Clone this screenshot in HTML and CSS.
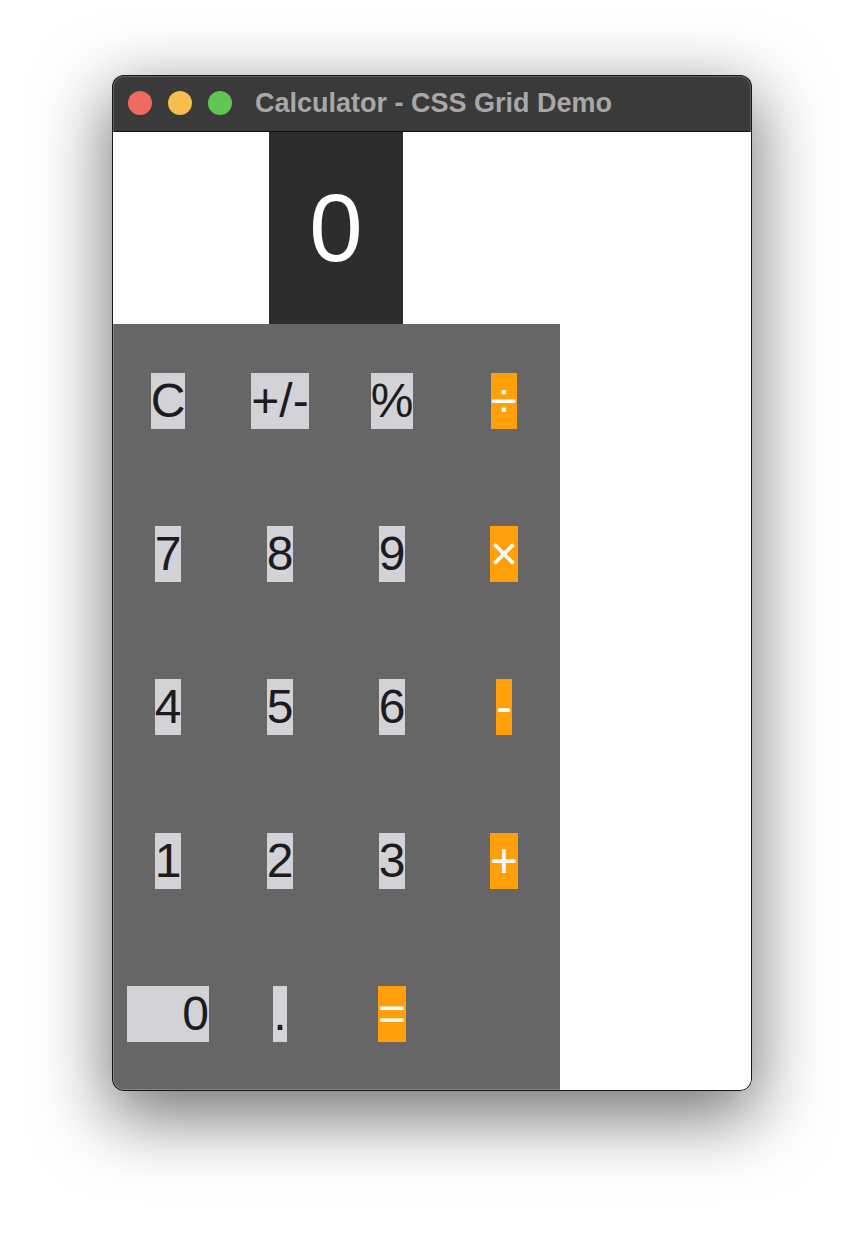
FILE: index.html
```html
<!DOCTYPE html>
<html lang="en">
<head>
<meta charset="utf-8">
<title>Calculator - CSS Grid Demo</title>
<link rel="stylesheet" href="styles.css">
</head>
<body>
<div class="window">
  <div class="titlebar">
    <div class="lights">
      <span class="light red"></span>
      <span class="light yellow"></span>
      <span class="light green"></span>
    </div>
    <div class="title">Calculator - CSS Grid Demo</div>
  </div>
  <div class="content">
    <div class="calc">
      <div class="display">0</div>
      <div class="keypad">
        <button class="key">C</button>
        <button class="key">+/-</button>
        <button class="key">%</button>
        <button class="key op">÷</button>
        <button class="key">7</button>
        <button class="key">8</button>
        <button class="key">9</button>
        <button class="key op">×</button>
        <button class="key">4</button>
        <button class="key">5</button>
        <button class="key">6</button>
        <button class="key op">-</button>
        <button class="key">1</button>
        <button class="key">2</button>
        <button class="key">3</button>
        <button class="key op">+</button>
        <button class="key zero">0</button>
        <button class="key">.</button>
        <button class="key op">=</button>
      </div>
    </div>
  </div>
</div>
</body>
</html>
```
FILE: styles.css
```css
html, body {
  margin: 0;
  padding: 0;
  background: #ffffff;
}

body {
  box-sizing: border-box;
  min-height: 1240px;
  padding-top: 75px;
  font-family: "Liberation Sans", Arial, sans-serif;
}

.window {
  position: relative;
  width: 640px;
  height: 1016px;
  margin: 0 auto;
  border-radius: 12px;
  overflow: hidden;
  display: flex;
  flex-direction: column;
  background: #ffffff;
  box-shadow: 0 22px 70px 4px rgba(0, 0, 0, 0.55);
}

.window::after {
  content: "";
  position: absolute;
  inset: 0;
  border-radius: 12px;
  box-shadow: inset 0 0 0 1px #161616, inset 0 0 0 2px rgba(255, 255, 255, 0.2);
  pointer-events: none;
}

.titlebar {
  height: 56px;
  flex: none;
  background: #3b3a3a;
  border-bottom: 1px solid #0e0e0e;
  display: flex;
  align-items: center;
  padding-left: 16px;
}

.lights {
  display: flex;
  gap: 16px;
}

.light {
  width: 24px;
  height: 24px;
  border-radius: 50%;
  display: block;
}

.red { background: #ee6a5f; }
.yellow { background: #f5be4f; }
.green { background: #61c554; }

.title {
  margin-left: 23px;
  color: #a8a8a8;
  font-weight: bold;
  font-size: 27px;
}

.content {
  flex: 1;
  display: flex;
  min-height: 0;
}

.calc {
  width: 448px;
  display: flex;
  flex-direction: column;
}

.display {
  align-self: center;
  background: #2d2d2d;
  color: #ffffff;
  font-size: 96px;
  line-height: 112px;
  padding: 40px;
}

.keypad {
  flex: 1;
  background: #666666;
  display: grid;
  grid-template-columns: repeat(4, 1fr);
  grid-template-rows: repeat(5, 1fr);
  place-items: center;
}

.key {
  font-family: "Liberation Sans", Arial, sans-serif;
  font-size: 48px;
  line-height: 56px;
  padding: 0;
  margin: 0;
  border: none;
  border-radius: 0;
  background: #d3d2d7;
  color: #1c1c1e;
}

.key.op {
  background: #ff9f0a;
  color: #ffffff;
}

.key.zero {
  width: 82px;
  text-align: right;
}
```
